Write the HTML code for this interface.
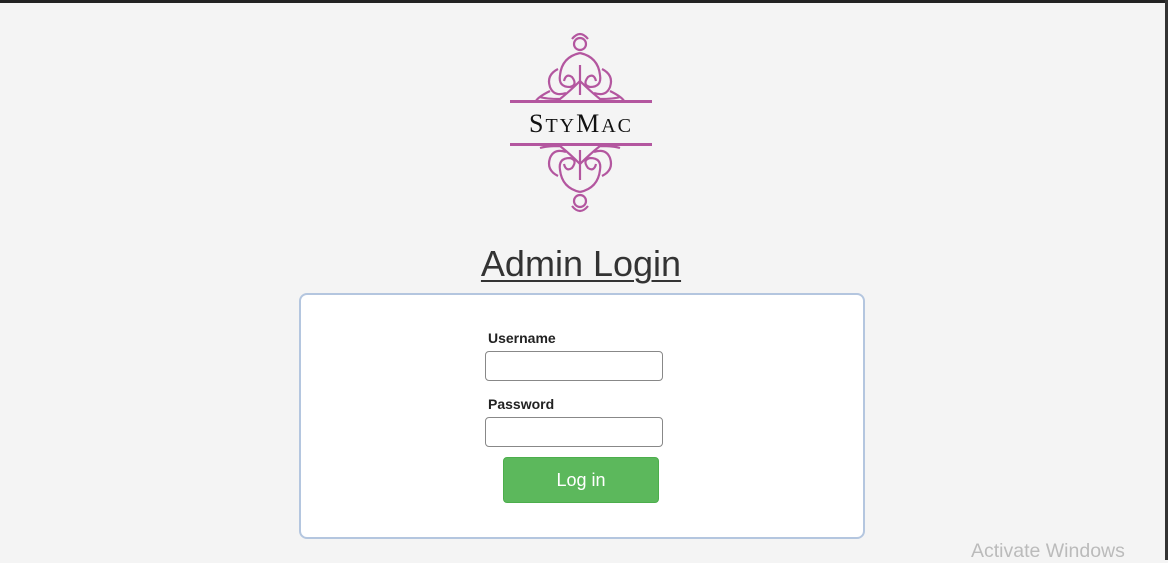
<!DOCTYPE html>
<html><head><style>
body{margin:0;width:1168px;height:560px;background:#f4f4f4;position:relative;overflow:hidden;font-family:"Liberation Sans",Arial,sans-serif}
.top{position:absolute;left:0;top:0;width:1168px;height:3px;background:#222}
.right{position:absolute;right:0;top:0;width:3px;height:560px;background:#333}
h1{position:absolute;left:0;width:1162px;top:243px;margin:0;text-align:center;font-weight:normal;font-size:36px;color:#333;text-decoration:underline;text-decoration-thickness:2px;text-underline-offset:4px}
.box{position:absolute;left:299px;top:293px;width:562px;height:242px;background:#fff;border:2px solid #b4c6df;border-radius:8px}
label{position:absolute;font-weight:bold;font-size:14px;color:#222}
.inp{position:absolute;width:176px;height:28px;border:1px solid #888;border-radius:4px;background:#fff}
.btn{position:absolute;left:503px;top:457px;width:156px;height:46px;background:#5cb85c;border:1px solid #4cae4c;border-radius:4px;color:#fff;font-size:18px;text-align:center;line-height:44px;box-sizing:border-box}
.act{position:absolute;left:971px;top:540px;font-size:19.5px;color:#bbb}
</style></head><body>
<div class="top"></div><div class="right"></div>
<svg style="position:absolute;left:500px;top:25px" width="160" height="195" viewBox="0 0 160 195">
<g fill="none" stroke="#b3569f" stroke-width="2.2">
<circle cx="80" cy="19" r="6"/><path d="M72 14 Q80 4 88 14"/>
<path d="M80 28 Q62 32 60 50 Q58 62 70 62 Q78 60 72 52 Q66 48 64 56"/>
<path d="M80 28 Q98 32 100 50 Q102 62 90 62 Q82 60 88 52 Q94 48 96 56"/>
<path d="M58 44 Q46 50 50 62 Q54 72 66 68"/><path d="M102 44 Q114 50 110 62 Q106 72 94 68"/>
<path d="M80 56 Q70 66 60 74 Q46 74 40 72"/><path d="M80 56 Q90 66 100 74 Q114 74 120 72"/>
<path d="M50 66 Q38 72 36 76"/><path d="M110 66 Q122 72 124 76"/>
<path d="M80 40 L80 70"/>
<circle cx="80" cy="176" r="6"/><path d="M72 181 Q80 191 88 181"/>
<path d="M80 167 Q62 163 60 145 Q58 133 70 133 Q78 135 72 143 Q66 147 64 139"/>
<path d="M80 167 Q98 163 100 145 Q102 133 90 133 Q82 135 88 143 Q94 147 96 139"/>
<path d="M58 151 Q46 145 50 133 Q54 123 66 127"/><path d="M102 151 Q114 145 110 133 Q106 123 94 127"/>
<path d="M80 139 Q70 129 60 121 Q46 121 40 123"/><path d="M80 139 Q90 129 100 121 Q114 121 120 123"/>
<path d="M80 125 L80 155"/>
</g>
<rect x="10" y="75" width="142" height="3" fill="#b3569f"/>
<rect x="10" y="118" width="142" height="3" fill="#b3569f"/>
<text x="81" y="107" text-anchor="middle" font-family="Liberation Serif,serif" font-size="26" fill="#111" letter-spacing="2">S<tspan font-size="20">TY</tspan>M<tspan font-size="20">AC</tspan></text>
</svg>
<h1>Admin Login</h1>
<div class="box"></div>
<label style="left:488px;top:330px">Username</label>
<div class="inp" style="left:485px;top:351px"></div>
<label style="left:488px;top:396px">Password</label>
<div class="inp" style="left:485px;top:417px"></div>
<div class="btn">Log in</div>
<div class="act">Activate Windows</div>
</body></html>
